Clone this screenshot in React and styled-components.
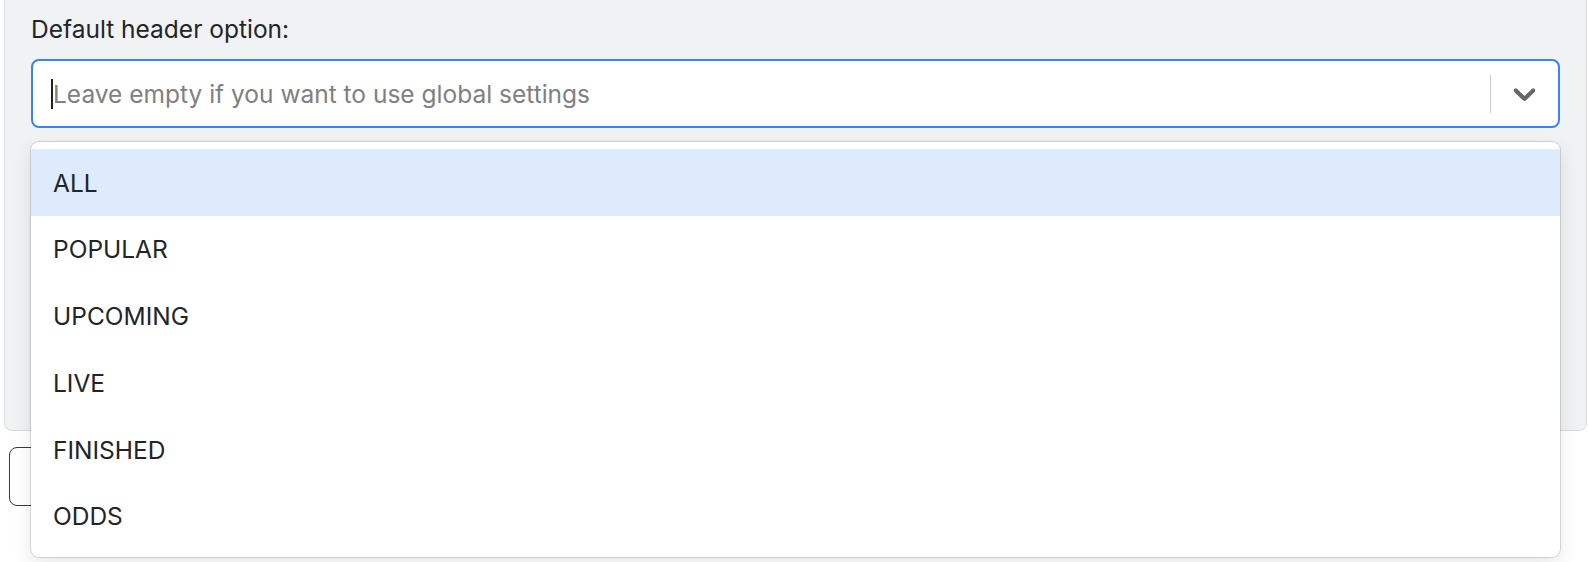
import React from 'react'
import styled, { createGlobalStyle } from 'styled-components';

const GlobalStyle = createGlobalStyle`
body{
    margin: 0;
    background: #ffffff;
    font-family: Inter, "Liberation Sans", Arial, sans-serif;
    color: #212529;
}
`

const Page = styled.div`
padding: 0 1px 0 4px;
height: 562px;
overflow: hidden;
`

const Panel = styled.div`
background: #f1f2f4;
border: 1px solid #d8dadd;
border-top: none;
border-radius: 0 0 8px 8px;
padding: 11px 26px 302px 26px;
`

const Label = styled.div`
font-size: 24.5px;
line-height: 36px;
margin-bottom: 12px;
`

const SelectBox = styled.div`
position: relative;
`

const Control = styled.div`
height: 69px;
box-sizing: border-box;
display: flex;
align-items: center;
background: white;
border: 2px solid #3b82f6;
border-radius: 8px;
.value{
    flex: 1;
    display: flex;
    align-items: center;
    padding-left: 18px;
}
`

const Caret = styled.span`
width: 2px;
height: 30px;
background: #222;
margin-right: 0;
`

const Placeholder = styled.span`
font-size: 24.5px;
color: #808080;
`

const Separator = styled.span`
width: 1px;
height: 38px;
background: #cccccc;
`

const Indicator = styled.div`
padding: 0 15px;
display: flex;
align-items: center;
color: #666666;
`

const Menu = styled.div`
position: absolute;
top: 83px;
left: 0;
right: 0;
background: white;
border-radius: 8px;
box-shadow: 0 0 0 1px rgba(0,0,0,0.13), 0 7px 20px rgba(0,0,0,0.1);
padding: 7px 0;
`

const Option = styled.div`
font-size: 24.5px;
line-height: 36.75px;
padding: 15.5px 22px 14.5px;
background: ${props => props.focused ? '#deebfc' : 'transparent'};
`

const SaveButton = styled.button`
margin: 16px 0 0 5px;
height: 59px;
width: 160px;
background: white;
border: 1px solid #343a40;
border-radius: 8px;
font-size: 24px;
font-family: inherit;
color: #343a40;
`

const options = ['ALL', 'POPULAR', 'UPCOMING', 'LIVE', 'FINISHED', 'ODDS'];

export default function App() {
    return (
        <Page>
            <GlobalStyle />
            <Panel>
                <Label>Default header option:</Label>
                <SelectBox>
                    <Control>
                        <div className="value">
                            <Caret />
                            <Placeholder>Leave empty if you want to use global settings</Placeholder>
                        </div>
                        <Separator />
                        <Indicator>
                            <svg width="37" height="37" viewBox="0 0 20 20" fill="currentColor">
                                <path d="M4.516 7.548c0.436-0.446 1.043-0.481 1.576 0l3.908 3.747 3.908-3.747c0.533-0.481 1.141-0.446 1.574 0 0.436 0.445 0.408 1.197 0 1.615-0.406 0.418-4.695 4.502-4.695 4.502-0.217 0.223-0.502 0.335-0.787 0.335s-0.57-0.112-0.789-0.335c0 0-4.287-4.084-4.695-4.502s-0.436-1.17 0-1.615z" />
                            </svg>
                        </Indicator>
                    </Control>
                    <Menu>
                        {
                            options.map((eachOption, index) => {
                                return <Option key={eachOption} focused={index === 0}>{eachOption}</Option>
                            })
                        }
                    </Menu>
                </SelectBox>
            </Panel>
            <SaveButton>Save</SaveButton>
        </Page>
    )
}
